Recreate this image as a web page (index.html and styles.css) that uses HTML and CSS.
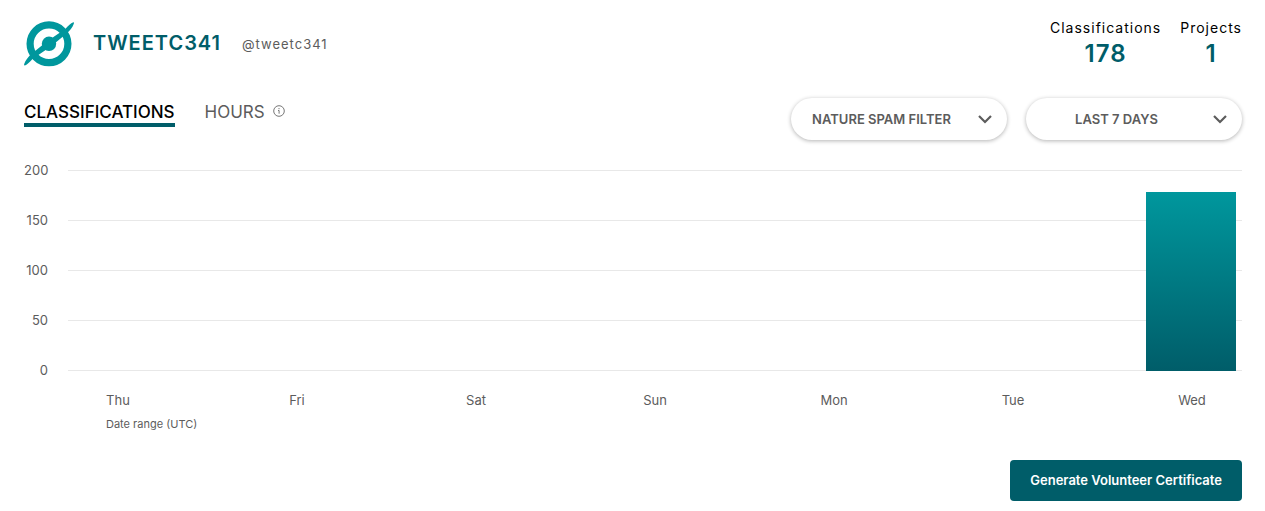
FILE: index.html
```html
<!DOCTYPE html>
<html lang="en">
<head>
<meta charset="utf-8">
<meta name="viewport" content="width=device-width, initial-scale=1">
<title>tweetc341 statistics</title>
<link rel="stylesheet" href="styles.css">
</head>
<body>
<main class="stats">
  <header class="profile">
    <svg class="logo" viewBox="0 0 50 46" aria-hidden="true">
      <circle cx="25" cy="22.8" r="18.9" fill="none" stroke="#00979d" stroke-width="7.2"/>
      <circle cx="25" cy="22.8" r="7.2" fill="#00979d"/>
      <path d="M49.3 1.2Q50.3 1 49.8 2.700C48.500 6.500 46 9.500 42 13L27.500 25 8.500 38C5.500 41 3.500 43.500 1 44.500Q-.3 44.700 .2 43C1.500 39.500 4 36 8 32.600L22.500 20.700 41.500 7.700C44.500 4.500 46.500 2.300 49.300 1.200Z" fill="#00979d"/>
    </svg>
    <h1 class="name">TWEETC341</h1>
    <span class="handle">@tweetc341</span>
    <dl class="totals">
      <div class="total"><dt>Classifications</dt><dd>178</dd></div>
      <div class="total"><dt>Projects</dt><dd>1</dd></div>
    </dl>
  </header>

  <div class="toolbar">
    <div class="tabs" role="tablist">
      <button class="tab tab-active" role="tab" aria-selected="true">CLASSIFICATIONS</button>
      <button class="tab" role="tab" aria-selected="false">HOURS</button>
      <button class="info" aria-label="About hours">
        <svg viewBox="0 0 12 12" width="12" height="12" fill="none" stroke="#777" aria-hidden="true"><circle cx="6" cy="6" r="5.3"/><path d="M6 3v1.200M5 5.500H6.100V8.700"/></svg>
      </button>
    </div>
    <div class="filters">
      <div class="filter">
        <select class="select" aria-label="Project"><option>NATURE SPAM FILTER</option></select>
        <svg class="chevron" viewBox="0 0 14 9" aria-hidden="true"><path d="M1 1l6 6 6-6" fill="none" stroke="#5c5c5c" stroke-width="2.2"/></svg>
      </div>
      <div class="filter">
        <select class="select" aria-label="Date range"><option>LAST 7 DAYS</option></select>
        <svg class="chevron" viewBox="0 0 14 9" aria-hidden="true"><path d="M1 1l6 6 6-6" fill="none" stroke="#5c5c5c" stroke-width="2.2"/></svg>
      </div>
    </div>
  </div>

  <section class="chart" aria-label="Classifications by day">
    <div class="scale"><span>200</span><span>150</span><span>100</span><span>50</span><span>0</span></div>
    <div class="plot">
      <div class="band"></div><div class="band"></div><div class="band"></div><div class="band"></div>
      <div class="bars"><div class="bar" style="height: 89%"></div></div>
    </div>
    <div class="days"><span>Thu</span><span>Fri</span><span>Sat</span><span>Sun</span><span>Mon</span><span>Tue</span><span>Wed</span></div>
    <p class="range">Date range (UTC)</p>
  </section>

  <div class="actions"><button class="generate">Generate Volunteer Certificate</button></div>
</main>
</body>
</html>
```
FILE: styles.css
```css
* { box-sizing: border-box; }
body { margin: 0; background: #fff; color: #000; font: 13px/20px Inter, "Liberation Sans", sans-serif; }
button, select { font: inherit; }
button { border: 0; padding: 0; background: none; cursor: pointer; }
.stats { padding: 18px 23px 10px 24px; }

.profile { display: flex; align-items: center; height: 52px; }
.logo { width: 50px; height: 46px; }
.name { margin: 0 21px 2px 19px; color: #005d69; font-size: 20px; line-height: 28px; font-weight: 600; letter-spacing: 1px; }
.handle { color: #5c5c5c; letter-spacing: 1px; }
.totals { display: flex; gap: 19px; margin: 0 0 0 auto; text-align: center; letter-spacing: 1px; }
.total dt { font-size: 14px; }
.total dd { margin: 0; color: #005d69; font-size: 24px; line-height: 32px; font-weight: 600; }

.toolbar { display: flex; justify-content: space-between; align-items: flex-start; margin-top: 28px; }
.tabs { display: flex; align-items: flex-start; padding-top: 3px; }
.tab { margin-right: 30px; border-bottom: 4px solid transparent; color: #5c5c5c; font-size: 17px; line-height: 22px; }
.tab + .tab { margin-right: 8px; }
.tab-active { border-color: #005d69; color: #000; font-weight: 500; }
.info { display: flex; align-items: center; height: 20px; }
.filters { display: flex; gap: 19px; }
.filter { position: relative; }
.select { display: block; width: 216px; height: 42px; padding: 0 55px 0 20px; border: 0; border-radius: 21px; appearance: none; background: #fff; box-shadow: 0 1px 4px rgba(0, 0, 0, .3); color: #5c5c5c; font-size: 13px; font-weight: 600; text-align: center; text-align-last: center; }
.chevron { position: absolute; top: 17px; right: 15px; width: 14px; height: 9px; pointer-events: none; }

.chart { display: grid; grid-template-columns: 24px 1fr; column-gap: 20px; margin-top: 20px; color: #5c5c5c; }
.scale { display: flex; flex-direction: column; gap: 30px; text-align: right; }
.plot { position: relative; margin: 10px 0 9px; border-bottom: 1px solid #e8e8e8; }
.band { height: 50px; border-top: 1px solid #e8e8e8; }
.bars { position: absolute; inset: 0 6px -1px; display: flex; justify-content: flex-end; align-items: flex-end; }
.bar { width: 90px; background: linear-gradient(#00979d, #005d69); }
.days { grid-column: 2; display: flex; justify-content: space-between; padding: 0 5px; margin-top: 10px; text-align: center; }
.days span { width: 90px; }
.range { grid-column: 2; margin: 4px 0 0 38px; font-size: 11px; }

.actions { display: flex; justify-content: flex-end; margin-top: 26px; }
.generate { padding: 10px 20px; border-radius: 4px; background: #005d69; color: #fff; line-height: 21px; font-weight: 600; }
```
